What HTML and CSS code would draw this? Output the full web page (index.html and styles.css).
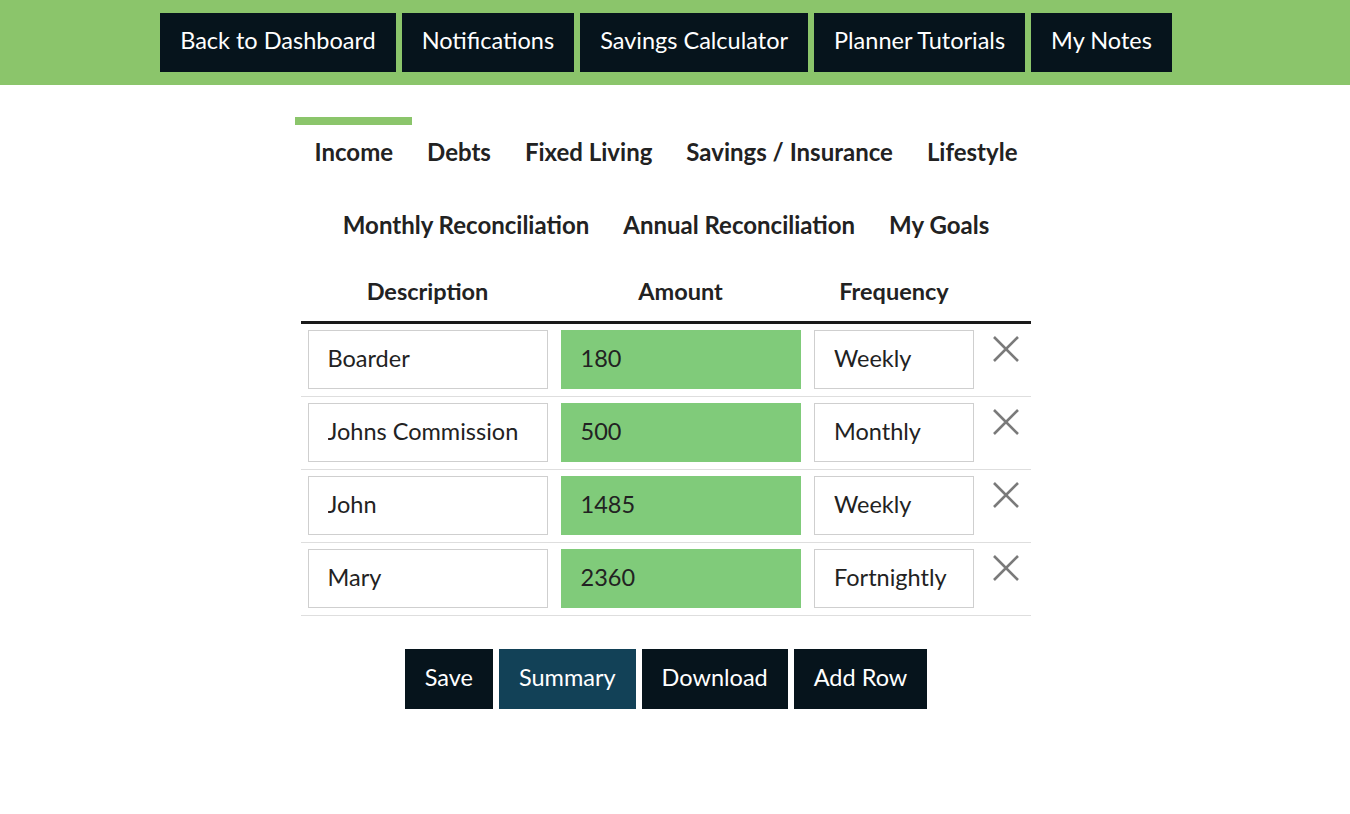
FILE: index.html
```html
<!DOCTYPE html>
<html lang="en">
<head>
    <meta charset="UTF-8">
    <meta name="viewport" content="width=device-width, initial-scale=1.0">
    <title>Income Planner</title>
    <link rel="stylesheet" href="styles.css">
</head>
<body>
    <header class="top-bar">
      <nav class="top-nav">
        <a class="nav-btn" href="#">Back to Dashboard</a>
        <a class="nav-btn" href="#">Notifications</a>
        <a class="nav-btn" href="#">Savings Calculator</a>
        <a class="nav-btn" href="#">Planner Tutorials</a>
        <a class="nav-btn" href="#">My Notes</a>
      </nav>
    </header>

    <main class="planner">
      <ul class="tabs">
        <li class="tab active">Income</li>
        <li class="tab">Debts</li>
        <li class="tab">Fixed Living</li>
        <li class="tab">Savings / Insurance</li>
        <li class="tab">Lifestyle</li>
        <li class="tab">Monthly Reconciliation</li>
        <li class="tab">Annual Reconciliation</li>
        <li class="tab">My Goals</li>
      </ul>

      <div class="budget-table">
        <div class="table-head">
          <div>Description</div>
          <div>Amount</div>
          <div>Frequency</div>
          <div></div>
        </div>

        <div class="table-row">
          <input class="field" type="text" value="Boarder">
          <input class="field amount" type="text" value="180">
          <input class="field freq" type="text" value="Weekly">
          <button class="remove" title="Remove row">
            <svg width="28" height="28" viewBox="0 0 28 28"><path d="M2 2 L26 26 M26 2 L2 26" stroke="#7a7a7a" stroke-width="2.6" fill="none"/></svg>
          </button>
        </div>

        <div class="table-row">
          <input class="field" type="text" value="Johns Commission">
          <input class="field amount" type="text" value="500">
          <input class="field freq" type="text" value="Monthly">
          <button class="remove" title="Remove row">
            <svg width="28" height="28" viewBox="0 0 28 28"><path d="M2 2 L26 26 M26 2 L2 26" stroke="#7a7a7a" stroke-width="2.6" fill="none"/></svg>
          </button>
        </div>

        <div class="table-row">
          <input class="field" type="text" value="John">
          <input class="field amount" type="text" value="1485">
          <input class="field freq" type="text" value="Weekly">
          <button class="remove" title="Remove row">
            <svg width="28" height="28" viewBox="0 0 28 28"><path d="M2 2 L26 26 M26 2 L2 26" stroke="#7a7a7a" stroke-width="2.6" fill="none"/></svg>
          </button>
        </div>

        <div class="table-row">
          <input class="field" type="text" value="Mary">
          <input class="field amount" type="text" value="2360">
          <input class="field freq" type="text" value="Fortnightly">
          <button class="remove" title="Remove row">
            <svg width="28" height="28" viewBox="0 0 28 28"><path d="M2 2 L26 26 M26 2 L2 26" stroke="#7a7a7a" stroke-width="2.6" fill="none"/></svg>
          </button>
        </div>
      </div>

      <div class="actions">
        <button class="action-btn">Save</button>
        <button class="action-btn summary">Summary</button>
        <button class="action-btn">Download</button>
        <button class="action-btn">Add Row</button>
      </div>
    </main>
</body>
</html>
```

FILE: styles.css
```css
* {
    box-sizing: border-box;
    margin: 0;
    padding: 0;
}

body {
    font-family: Lato, 'Liberation Sans', sans-serif;
    background: #fff;
    color: #222;
}

/* top navigation */
.top-bar {
    background: #8bc56b;
    height: 85px;
    padding: 13px 18px 0 0;
}

.top-nav {
    display: flex;
    justify-content: center;
    gap: 6px;
}

.nav-btn {
    display: flex;
    align-items: center;
    height: 59px;
    padding: 0 20px 5px;
    background: #06141c;
    color: #fff;
    font-size: 23.5px;
    text-decoration: none;
}

/* planner body */
.planner {
    display: flex;
    flex-direction: column;
    align-items: center;
    padding: 32px 18px 0 0;
}

.tabs {
    list-style: none;
    display: flex;
    flex-wrap: wrap;
    justify-content: center;
    width: 780px;
}

.tab {
    position: relative;
    padding: 18px 17px 22px;
    font-size: 24px;
    line-height: 33px;
    font-weight: bold;
    color: #222;
    cursor: pointer;
}

.tab.active::before {
    content: "";
    position: absolute;
    top: 0;
    left: -3px;
    right: -2px;
    height: 8px;
    background: #8bc56b;
}

.budget-table {
    width: 730px;
}

.table-head,
.table-row {
    display: grid;
    grid-template-columns: 253px 253px 174px 50px;
    align-items: center;
    justify-items: center;
}

.table-head {
    padding: 12px 0 13px;
    border-bottom: 3px solid #1a1a1a;
    font-size: 23.5px;
    line-height: 33px;
    font-weight: bold;
}

.table-row {
    padding: 6px 0 7px;
    border-bottom: 1px solid #dedede;
}

.field {
    width: 240px;
    height: 59px;
    padding: 0 19px 4px;
    border: 1px solid #cfcfcf;
    background: #fff;
    font-family: Lato, 'Liberation Sans', sans-serif;
    font-size: 23.5px;
    color: #222;
    outline: none;
}

.field.amount {
    background: #80cb7a;
    border-color: #80cb7a;
}

.field.freq {
    width: 160px;
}

.remove {
    align-self: start;
    margin-top: 5px;
    width: 28px;
    height: 28px;
    border: none;
    background: none;
    cursor: pointer;
}

.remove svg {
    display: block;
}

/* bottom buttons */
.actions {
    display: flex;
    gap: 6px;
    margin-top: 33px;
}

.action-btn {
    height: 60px;
    padding: 0 20px 4px;
    border: none;
    background: #06141c;
    color: #fff;
    font-family: Lato, 'Liberation Sans', sans-serif;
    font-size: 23.5px;
    cursor: pointer;
}

.action-btn.summary {
    background: #124157;
}
```
